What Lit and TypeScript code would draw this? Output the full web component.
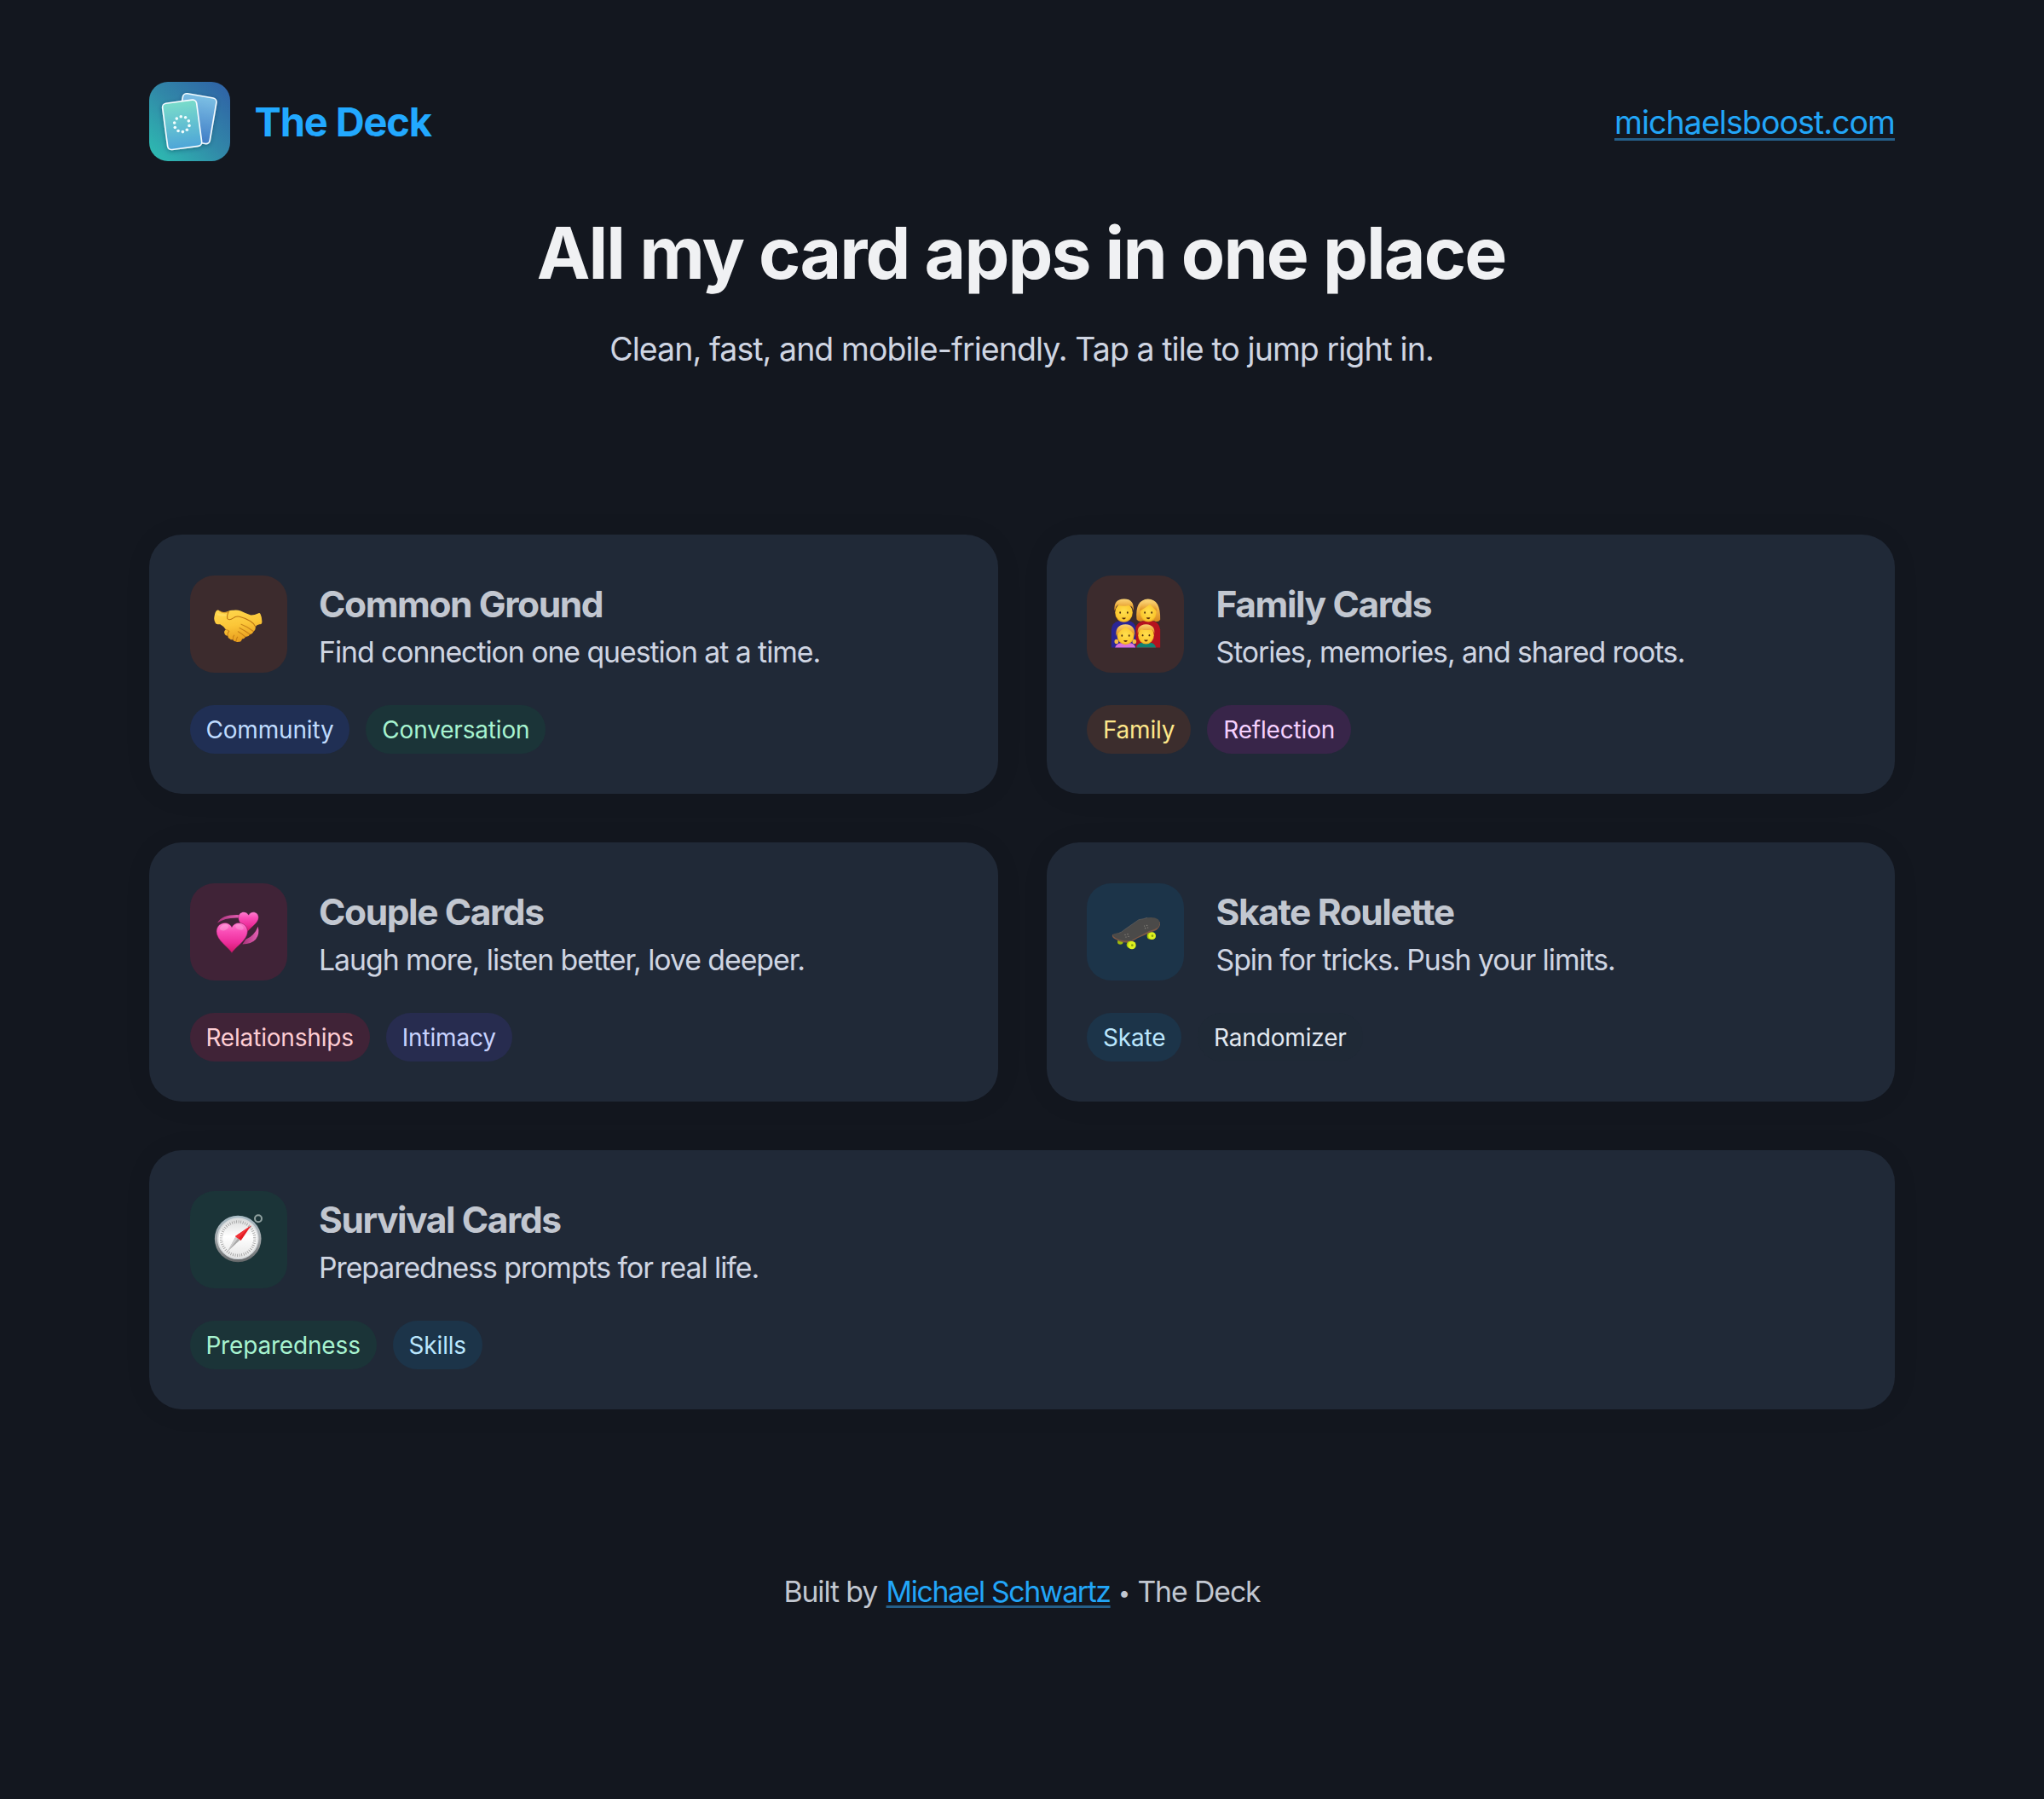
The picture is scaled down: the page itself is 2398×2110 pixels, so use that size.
import { LitElement, html, css, svg, nothing } from "lit";
import type { TemplateResult } from "lit";
import { customElement, property } from "lit/decorators.js";
import { classMap } from "lit/directives/class-map.js";

type Tag = { label: string; tone: string };
type Deck = {
  icon: string;
  tone: string;
  title: string;
  text: string;
  tags: Tag[];
  wide?: boolean;
};

const DECKS: Deck[] = [
  {
    icon: "handshake",
    tone: "orange",
    title: "Common Ground",
    text: "Find connection one question at a time.",
    tags: [
      { label: "Community", tone: "blue" },
      { label: "Conversation", tone: "green" },
    ],
  },
  {
    icon: "family",
    tone: "orange",
    title: "Family Cards",
    text: "Stories, memories, and shared roots.",
    tags: [
      { label: "Family", tone: "amber" },
      { label: "Reflection", tone: "fuchsia" },
    ],
  },
  {
    icon: "hearts",
    tone: "rose",
    title: "Couple Cards",
    text: "Laugh more, listen better, love deeper.",
    tags: [
      { label: "Relationships", tone: "rose" },
      { label: "Intimacy", tone: "indigo" },
    ],
  },
  {
    icon: "skateboard",
    tone: "sky",
    title: "Skate Roulette",
    text: "Spin for tricks. Push your limits.",
    tags: [
      { label: "Skate", tone: "sky" },
      { label: "Randomizer", tone: "slate" },
    ],
  },
  {
    icon: "compass",
    tone: "green",
    title: "Survival Cards",
    text: "Preparedness prompts for real life.",
    tags: [
      { label: "Preparedness", tone: "green" },
      { label: "Skills", tone: "sky" },
    ],
    wide: true,
  },
];

const handshake = html`<svg viewBox="48 10.5 171 171" aria-hidden="true">
  <defs>
    <linearGradient id="skin" x1="0" y1="0" x2="0.3" y2="1">
      <stop offset="0" stop-color="#ffd84f" />
      <stop offset="0.55" stop-color="#fbc638" />
      <stop offset="1" stop-color="#e9a01f" />
    </linearGradient>
  </defs>
  <path fill="url(#skin)" d="M57 50 Q62 46 68 51 Q82 60 99 52 Q106 48 116 49 Q128 46 142 51 Q160 60 178 66 Q192 66 203 60 Q209 56 212 63 Q218 76 217 92 Q216 100 208 98 Q198 100 194 107 Q196 118 187 124 Q184 133 174 134 Q170 143 160 142 Q155 150 147 150 Q144 161 135 160 Q129 162 125 158 Q118 160 115 152 Q108 154 104 149 Q97 148 97 139 Q86 138 85 129 Q82 121 90 117 Q82 104 70 98 Q60 100 54 95 Q46 84 50 68 Q52 54 57 50Z" />
  <path fill="#ffe06a" opacity=".65" d="M58 56 Q66 62 84 62 L96 66 Q80 74 60 66Z" />
  <g fill="none" stroke="#bb7413" stroke-width="3.2" stroke-linecap="round" stroke-linejoin="round">
    <path d="M99 54 Q93 68 95 78 Q102 86 116 76 Q124 69 138 71 Q156 75 176 87 Q190 96 194 106" />
    <path d="M99 54 Q82 62 68 51" opacity=".5" />
    <path d="M144 98 Q166 106 187 123" opacity=".8" />
    <path d="M138 111 Q158 121 174 133" opacity=".8" />
    <path d="M133 124 Q147 132 158 142" opacity=".8" />
    <path d="M97 139 Q94 130 101 123 M115 152 Q113 144 119 137 M126 158 Q126 150 131 143" opacity=".75" />
    <path d="M90 117 Q96 118 101 122" opacity=".6" />
  </g>
</svg>`;

const hearts = html`<svg viewBox="48 93.5 171 171" aria-hidden="true">
  <defs>
    <linearGradient id="heart" x1="0" y1="0" x2="0" y2="1">
      <stop offset="0" stop-color="#ff7fd0" />
      <stop offset="0.3" stop-color="#f94db6" />
      <stop offset="0.65" stop-color="#ee2f9c" />
      <stop offset="1" stop-color="#d01567" />
    </linearGradient>
    <linearGradient id="swirl" x1="0" y1="0" x2="1" y2="0">
      <stop offset="0" stop-color="#a8327a" />
      <stop offset="1" stop-color="#e660b4" />
    </linearGradient>
  </defs>
  <path fill="url(#swirl)" d="M60 149 Q76 118 140 121 L139 131 Q88 128 60 149Z" />
  <path fill="url(#swirl)" d="M203 162 Q210 188 195 207 Q180 224 148 224 L160 207 Q190 195 203 162Z" />
  <path fill="url(#heart)" stroke="#40223a" stroke-width="1" d="M166 180 C151 160 133 149 134 129 C135 108 161 104 170 121 C180 104 205 110 205 130 C204 148 183 160 166 180Z" />
  <path fill="url(#heart)" stroke="#7c1f58" stroke-width="1.5" d="M111 254 C96 231 56 209 57 178 C58 147 98 138 111 164 C124 138 165 147 166 178 C167 209 126 231 111 254Z" />
  <ellipse cx="84" cy="165" rx="16" ry="10" fill="#fff" opacity=".22" transform="rotate(-20 84 165)" />
  <ellipse cx="138" cy="164" rx="15" ry="9" fill="#fff" opacity=".18" transform="rotate(20 138 164)" />
</svg>`;

const face = (cx: number, cy: number, rx: number, ry: number) => svg`
  <ellipse cx=${cx} cy=${cy} rx=${rx} ry=${ry} fill="url(#face)" />
  <ellipse cx=${cx - rx * 0.42} cy=${cy} rx="2.6" ry="3.6" fill="#4a2a0c" />
  <ellipse cx=${cx + rx * 0.42} cy=${cy} rx="2.6" ry="3.6" fill="#4a2a0c" />
  <path d="M${cx - 7} ${cy + ry * 0.52} h14 q-1.5 6 -7 6 q-5.5 0 -7 -6z" fill="#5c2f0a" />`;

const family = html`<svg viewBox="71.5 70.5 171 171" aria-hidden="true">
  <defs>
    <radialGradient id="face" cx="0.5" cy="0.45" r="0.6">
      <stop offset="0" stop-color="#ffdf4e" />
      <stop offset="0.75" stop-color="#fcc82f" />
      <stop offset="1" stop-color="#dd8f16" />
    </radialGradient>
    <linearGradient id="hair" x1="0" y1="0" x2="0" y2="1">
      <stop offset="0" stop-color="#fbd475" />
      <stop offset="0.5" stop-color="#eeb044" />
      <stop offset="1" stop-color="#d98a1c" />
    </linearGradient>
  </defs>
  <path fill="#2a2596" d="M71 240 V178 Q73 150 98 146 H130 Q152 149 157 168 V240Z" />
  <path fill="#b5121f" d="M157 240 V168 Q163 150 184 146 H216 Q240 150 243 176 V240Z" />
  <path fill="url(#hair)" d="M160 141 Q153 72 200 69 Q245 70 243 142 Q236 153 222 146 L180 146 Q168 152 160 141Z" />
  ${face(115, 117, 31, 34)}
  <path fill="url(#hair)" d="M82 110 Q78 70 115 69 Q152 68 149 110 L145 100 Q142 91 130 92 Q106 96 94 90 Q87 95 86 102Z" />
  ${face(201, 117, 29, 33)}
  <path fill="url(#hair)" d="M171 112 Q168 86 194 77 Q230 76 232 113 Q221 104 207 88 Q188 102 171 112Z" />
  <path fill="#d873dc" d="M84 240 Q88 226 104 224 H138 Q152 225 156 240Z" />
  <path fill="#128272" d="M159 240 Q162 225 180 223 H208 Q224 225 228 240Z" />
  <ellipse cx="89" cy="219" rx="7" ry="8" fill="#f5bd45" />
  <ellipse cx="152" cy="219" rx="7" ry="8" fill="#f5bd45" />
  ${face(121, 198, 30, 32)}
  <path fill="url(#hair)" d="M88 199 Q83 160 121 158 Q157 160 153 199 Q147 185 121 167 Q95 185 88 199Z" />
  ${face(193, 197, 28, 31)}
  <path fill="url(#hair)" d="M164 192 Q159 160 193 158 Q227 160 222 192 Q220 179 210 177 Q192 181 177 176 Q167 180 164 192Z" />
</svg>`;

const skateboard = html`<svg viewBox="0 0 171 171" aria-hidden="true">
  <g>
    <ellipse cx="31" cy="122" rx="10" ry="9" fill="#9fb80c" />
    <path fill="#7d5845" d="M3 97 Q1 105 9 110 L28 120 Q50 128 68 124 Q79 117 92 109 L150 84 Q166 78 171 62 L171 52Z" />
    <path fill="#4b4a49" d="M4 99 Q8 91 26 91 Q34 90 46 79 L96 44 Q112 42 126 37 Q150 33 164 43 Q176 56 164 71 Q150 80 132 84 L86 108 Q70 120 56 118 Q32 118 18 110 Q6 104 4 99Z" />
    <path fill="none" stroke="#64615d" stroke-width="2" d="M26 91 Q34 90 46 79 L96 44 Q112 42 126 37" />
    <g fill="#95928a">
      <circle cx="116" cy="66" r="1.8" /><circle cx="125" cy="64" r="1.8" />
      <circle cx="119" cy="74" r="1.8" /><circle cx="128" cy="72" r="1.8" />
      <circle cx="48" cy="97" r="1.8" /><circle cx="57" cy="95" r="1.8" />
      <circle cx="51" cy="105" r="1.8" /><circle cx="60" cy="103" r="1.8" />
    </g>
    <circle cx="137" cy="101" r="12" fill="#a9c40a" />
    <circle cx="143" cy="101" r="13" fill="#dcf01f" />
    <circle cx="144" cy="101" r="4" fill="#8ba012" />
    <circle cx="66" cy="132" r="13" fill="#a9c40a" />
    <circle cx="72" cy="134" r="14" fill="#dcf01f" />
    <circle cx="73" cy="134" r="4" fill="#8ba012" />
  </g>
</svg>`;

const compass = html`<svg viewBox="0 0 171 171" aria-hidden="true">
  <defs>
    <linearGradient id="rim" x1="0" y1="0" x2="0" y2="1">
      <stop offset="0" stop-color="#a9bcc6" />
      <stop offset="0.5" stop-color="#a3a7aa" />
      <stop offset="1" stop-color="#66696b" />
    </linearGradient>
    <linearGradient id="dial" x1="0" y1="0" x2="0" y2="1">
      <stop offset="0" stop-color="#dcdddd" />
      <stop offset="0.45" stop-color="#ffffff" />
      <stop offset="1" stop-color="#e6e6e6" />
    </linearGradient>
  </defs>
  <circle cx="156" cy="13" r="12" fill="none" stroke="#8fa09f" stroke-width="6" />
  <circle cx="84.5" cy="84" r="82" fill="url(#rim)" />
  <circle cx="84.5" cy="83" r="73" fill="#d9dcde" />
  <circle cx="84.5" cy="83" r="68" fill="url(#dial)" />
  <circle cx="84.5" cy="83" r="59" fill="none" stroke="#9b9b9b" stroke-width="10" stroke-dasharray="2.4 5.32" />
  <path fill="#a9a9a9" d="M92 88 L76 77 L48 128Z" />
  <path fill="#cfcfcf" d="M84 83 L76 77 L48 128Z" />
  <path fill="#e31b23" d="M95 90 L75 75 L131 37Z" />
  <path fill="#f23338" d="M85 83 L75 75 L131 37Z" />
</svg>`;

const ICONS: Record<string, TemplateResult> = { handshake, family, hearts, skateboard, compass };

const ringDots = Array.from({ length: 10 }, (_, i) => {
  const a = ((i * 36 - 97) * Math.PI) / 180;
  return { x: 130 + 26.5 * Math.cos(a), y: 167 + 27 * Math.sin(a) };
});

const logo = html`<svg class="logo" viewBox="15 18 285 279" aria-hidden="true">
  <defs>
    <linearGradient id="tile" x1="0" y1="1" x2="1" y2="0">
      <stop offset="0" stop-color="#2dc0b2" />
      <stop offset="0.5" stop-color="#3188a8" />
      <stop offset="1" stop-color="#2f5fa6" />
    </linearGradient>
    <linearGradient id="front" x1="0" y1="0" x2="0" y2="1">
      <stop offset="0" stop-color="#79dcca" />
      <stop offset="1" stop-color="#4ea5d8" />
    </linearGradient>
    <linearGradient id="back" x1="0" y1="0" x2="0" y2="1">
      <stop offset="0" stop-color="#7cbfe4" />
      <stop offset="1" stop-color="#3f7cc6" />
    </linearGradient>
    <filter id="soft" x="-30%" y="-30%" width="160%" height="160%">
      <feDropShadow dx="0" dy="4" stdDeviation="8" flood-color="#0b2f4a" flood-opacity="0.4" />
    </filter>
  </defs>
  <rect x="15" y="18" width="285" height="279" rx="66" fill="url(#tile)" />
  <g stroke="#f4fbff" stroke-width="5" filter="url(#soft)">
    <rect x="121" y="66" width="120" height="163" rx="14" fill="url(#back)" transform="rotate(9.8 181 147.5)" />
    <rect x="70.5" y="87" width="121" height="164" rx="14" fill="url(#front)" transform="rotate(-7.6 131 169)" />
  </g>
  ${ringDots.map((d) => svg`<circle cx=${d.x.toFixed(1)} cy=${d.y.toFixed(1)} r="5.4" fill="#f2fdfd" />`)}
</svg>`;

@customElement("deck-tile")
export class DeckTile extends LitElement {
  @property({ attribute: false }) deck!: Deck;

  static styles = css`
    :host {
      display: block;
    }
    .card {
      box-sizing: border-box;
      height: 304px;
      padding: 48px 47.5px 47px;
      border-radius: 38px;
      background: #202937;
      display: flex;
      flex-direction: column;
      gap: 38px;
      box-shadow: 0 2px 40px rgba(8, 11, 17, 0.04);
    }
    .head {
      display: flex;
      align-items: flex-start;
      gap: 37.5px;
      height: 114px;
    }
    .icon {
      flex: none;
      width: 114px;
      height: 114px;
      border-radius: 28.5px;
      display: flex;
      align-items: center;
      justify-content: center;
    }
    .icon svg {
      width: 57px;
      height: 57px;
      overflow: visible;
    }
    .copy {
      display: flex;
      flex-direction: column;
      gap: 6px;
      padding-top: 7.5px;
      white-space: nowrap;
    }
    .title {
      margin: 0;
      font-size: 42.5px;
      line-height: 53px;
      font-weight: 650;
      letter-spacing: -1.42px;
      color: #c2c7d0;
    }
    .text {
      margin: 0;
      font-size: 33.8px;
      line-height: 48px;
      letter-spacing: -1.04px;
      color: #cfd5e2;
    }
    .tags {
      display: flex;
      gap: 19px;
    }
    .tag {
      height: 57px;
      padding: 0 18.9px;
      border-radius: 28.5px;
      font-size: 28px;
      line-height: 58px;
      letter-spacing: -0.17px;
      white-space: nowrap;
    }
    .orange { background: #3c2b2d; }
    .blue { background: #202f54; color: #bfdbfe; }
    .green { background: #1b3438; color: #a7f3d0; }
    .amber { background: #3c2d2d; color: #fde68a; }
    .fuchsia { background: #382549; color: #f5d0fe; }
    .rose { background: #402337; color: #fecdd3; }
    .indigo { background: #272c4f; color: #c7d2fe; }
    .sky { background: #1c3449; color: #bae6fd; }
    .slate { background: #1f2936; color: #e2e8f0; }
  `;

  render() {
    const d = this.deck;
    return html`<article class="card">
      <div class="head">
        <div class=${classMap({ icon: true, [d.tone]: true })}>${ICONS[d.icon] ?? nothing}</div>
        <div class="copy">
          <h2 class="title">${d.title}</h2>
          <p class="text">${d.text}</p>
        </div>
      </div>
      <div class="tags">
        ${d.tags.map((t) => html`<span class=${classMap({ tag: true, [t.tone]: true })}>${t.label}</span>`)}
      </div>
    </article>`;
  }
}

@customElement("app-root")
export class AppRoot extends LitElement {
  static styles = css`
    :host {
      display: block;
      box-sizing: border-box;
      min-height: 2110px;
      padding-top: 96px;
      background: #13171f;
      color: #c2c7d0;
      font-family: Inter, "Liberation Sans", sans-serif;
    }
    .page {
      width: 2048px;
      margin: 0 auto;
    }
    .top {
      display: flex;
      align-items: center;
      justify-content: space-between;
      height: 93px;
    }
    .brand {
      display: flex;
      align-items: center;
      gap: 28.5px;
      color: #22a9ff;
      font-size: 47px;
      font-weight: 700;
      letter-spacing: -1.15px;
      text-decoration: none;
    }
    .logo {
      width: 95px;
      height: 93px;
    }
    .link {
      color: #22a6f8;
      text-decoration: underline;
      text-decoration-color: #255f89;
      text-decoration-thickness: 3px;
      text-underline-offset: 5px;
    }
    .site {
      padding-top: 1px;
      font-size: 37.5px;
      letter-spacing: -0.935px;
    }
    .hero {
      display: flex;
      flex-direction: column;
      align-items: center;
      gap: 33.5px;
      padding: 58.4px 0 189.1px;
      white-space: nowrap;
    }
    .headline {
      margin: 0;
      font-size: 84px;
      line-height: 100px;
      font-weight: 700;
      letter-spacing: -1.91px;
      text-indent: -2px;
      color: #f0f1f3;
    }
    .lead {
      margin: 0;
      font-size: 37.5px;
      line-height: 57px;
      letter-spacing: -0.94px;
      text-indent: -1px;
      color: #cfd5e2;
    }
    .grid {
      display: grid;
      grid-template-columns: 1fr 1fr;
      gap: 57px;
    }
    .wide {
      grid-column: 1 / -1;
    }
    .foot {
      margin: 0;
      padding-top: 188.7px;
      text-align: center;
      font-size: 33.8px;
      line-height: 50px;
      letter-spacing: -1.1px;
      color: #c2c7d0;
    }
    .foot .link {
      margin-left: 2px;
      letter-spacing: -1.37px;
      text-underline-offset: 4px;
    }
    .dot {
      margin: 0 1px;
      font-size: 25px;
      vertical-align: 2px;
      line-height: 1;
    }
  `;

  render() {
    return html`<div class="page">
      <header class="top">
        <a class="brand">${logo}<span>The Deck</span></a>
        <a class="link site">michaelsboost.com</a>
      </header>
      <section class="hero">
        <h1 class="headline">All my card apps in one place</h1>
        <p class="lead">Clean, fast, and mobile-friendly. Tap a tile to jump right in.</p>
      </section>
      <main class="grid">
        ${DECKS.map((d) => html`<deck-tile class=${classMap({ wide: !!d.wide })} .deck=${d}></deck-tile>`)}
      </main>
      <footer>
        <p class="foot">Built by <a class="link">Michael Schwartz</a> <span class="dot">•</span> The Deck</p>
      </footer>
    </div>`;
  }
}
